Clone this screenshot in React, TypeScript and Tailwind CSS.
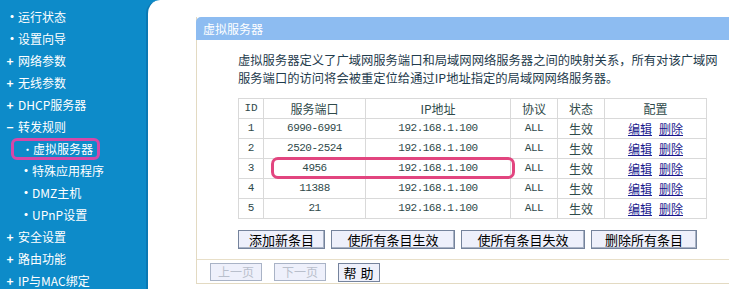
import React from 'react';

type MenuItem = { label: string; mark: '•' | '+' | '−'; sub?: boolean; active?: boolean };

const menu: MenuItem[] = [
  { label: '运行状态', mark: '•' },
  { label: '设置向导', mark: '•' },
  { label: '网络参数', mark: '+' },
  { label: '无线参数', mark: '+' },
  { label: 'DHCP服务器', mark: '+' },
  { label: '转发规则', mark: '−' },
  { label: '虚拟服务器', mark: '•', sub: true, active: true },
  { label: '特殊应用程序', mark: '•', sub: true },
  { label: 'DMZ主机', mark: '•', sub: true },
  { label: 'UPnP设置', mark: '•', sub: true },
  { label: '安全设置', mark: '+' },
  { label: '路由功能', mark: '+' },
  { label: 'IP与MAC绑定', mark: '+' },
];

const rows = [
  { id: 1, port: '6990-6991' },
  { id: 2, port: '2520-2524' },
  { id: 3, port: '4956' },
  { id: 4, port: '11388' },
  { id: 5, port: '21' },
];

const cjk = "font-['Noto_Sans_CJK_SC','Noto_Sans',sans-serif]";
const mono = "font-['Liberation_Mono','Noto_Sans_CJK_SC',monospace]";

const Sidebar = () => (
  <div className={`w-[146px] shrink-0 pt-[6px] text-white text-[12px] ${cjk}`}>
    {menu.map((m) =>
      m.active ? (
        <div
          key={m.label}
          className="ml-[11px] w-[89px] h-[22px] border-[3px] border-[#d548a8] rounded-[6px] flex items-center pl-[8px] gap-[5px]"
        >
          <span className="w-[6px] text-center text-[11px]">•</span>
          <span>{m.label}</span>
        </div>
      ) : (
        <div
          key={m.label}
          className={`h-[22px] flex items-center gap-[4px] ${m.sub ? 'pl-[20px]' : 'pl-[6px]'}`}
        >
          <span className="w-[8px] text-center font-bold text-[12px] leading-none">{m.mark}</span>
          <span>{m.label}</span>
        </div>
      )
    )}
  </div>
);

const Btn = ({ w, children }: { w: string; children: React.ReactNode }) => (
  <button
    type="button"
    className={`${w} h-[19px] bg-[#eef0fb] border border-[#75839c] shadow-[inset_-1px_-1px_0_#a8b2c4] text-[13px] text-black leading-none ${cjk}`}
  >
    {children}
  </button>
);

const cell = 'border border-[#d9d9d9] h-[20px] text-center';

export default function App() {
  return (
    <div className="w-[729px] h-[289px] overflow-hidden flex bg-[#0d8bc9]">
      <Sidebar />
      <div className="flex-1 bg-white rounded-tl-[14px] border-l-[2px] border-[#0a78b3] pt-[17px] pl-[48px]">
        <div className="w-[560px] border-l border-b border-[#e3dac2] h-[267px] flex flex-col">
          <div className={`h-[23px] bg-[#8dbcf1] rounded-tl-[5px] text-white text-[12px] pl-[7px] flex items-center -ml-px ${cjk}`}>
            虚拟服务器
          </div>
          <div className="pl-[41px] pt-[11px]">
            <p className={`w-[480px] text-[12.3px] leading-[18px] text-[#1f3c4d] ${cjk}`}>
              虚拟服务器定义了广域网服务端口和局域网网络服务器之间的映射关系，所有对该广域网服务端口的访问将会被重定位给通过IP地址指定的局域网网络服务器。
            </p>
            <div className="relative mt-[11px] w-[468px]">
              <table className={`w-[468px] border-collapse table-fixed text-[12px] text-[#2f4a4a] ${cjk}`}>
                <colgroup>
                  <col className="w-[25px]" />
                  <col className="w-[102px]" />
                  <col className="w-[145px]" />
                  <col className="w-[47px]" />
                  <col className="w-[47px]" />
                  <col className="w-[102px]" />
                </colgroup>
                <thead>
                  <tr>
                    <th className={`${cell} font-normal ${mono} text-[11px]`}>ID</th>
                    <th className={`${cell} font-normal`}>服务端口</th>
                    <th className={`${cell} font-normal`}>IP地址</th>
                    <th className={`${cell} font-normal`}>协议</th>
                    <th className={`${cell} font-normal`}>状态</th>
                    <th className={`${cell} font-normal`}>配置</th>
                  </tr>
                </thead>
                <tbody>
                  {rows.map((r) => (
                    <tr key={r.id}>
                      <td className={`${cell} ${mono} text-[11px]`}>{r.id}</td>
                      <td className={`${cell} ${mono} text-[11px] tracking-[-0.5px]`}>{r.port}</td>
                      <td className={`${cell} ${mono} text-[11px] tracking-[-0.5px]`}>192.168.1.100</td>
                      <td className={`${cell} ${mono} text-[11px] tracking-[-0.5px]`}>ALL</td>
                      <td className={cell}>生效</td>
                      <td className={cell}>
                        <span className="text-[#1c1a8e] underline mr-[7px]">编辑</span>
                        <span className="text-[#1c1a8e] underline">删除</span>
                      </td>
                    </tr>
                  ))}
                </tbody>
              </table>
              <div className="absolute left-[33px] top-[59px] w-[244px] h-[22px] border-[3px] border-[#e2457f] rounded-[7px] pointer-events-none" />
            </div>
            <div className="mt-[11px] flex gap-[6px]">
              <Btn w="w-[87px]">添加新条目</Btn>
              <Btn w="w-[124px]">使所有条目生效</Btn>
              <Btn w="w-[124px]">使所有条目失效</Btn>
              <Btn w="w-[106px]">删除所有条目</Btn>
            </div>
          </div>
          <div className="mt-[10px] border-t border-[#e8dfc8] pt-[3px] pl-[13px] flex gap-[12px]">
            <button
              type="button"
              className={`w-[52px] h-[18px] bg-[#eef0fb] border border-[#a9b3c6] text-[12px] text-[#b9bfcc] leading-none ${cjk}`}
            >
              上一页
            </button>
            <button
              type="button"
              className={`w-[52px] h-[18px] bg-[#eef0fb] border border-[#a9b3c6] text-[12px] text-[#b9bfcc] leading-none ${cjk}`}
            >
              下一页
            </button>
            <button
              type="button"
              className={`w-[42px] h-[19px] bg-[#eef0fb] border border-[#75839c] text-[13px] text-black leading-none tracking-[4px] pl-[3px] ${cjk}`}
            >
              帮助
            </button>
          </div>
        </div>
      </div>
    </div>
  );
}
